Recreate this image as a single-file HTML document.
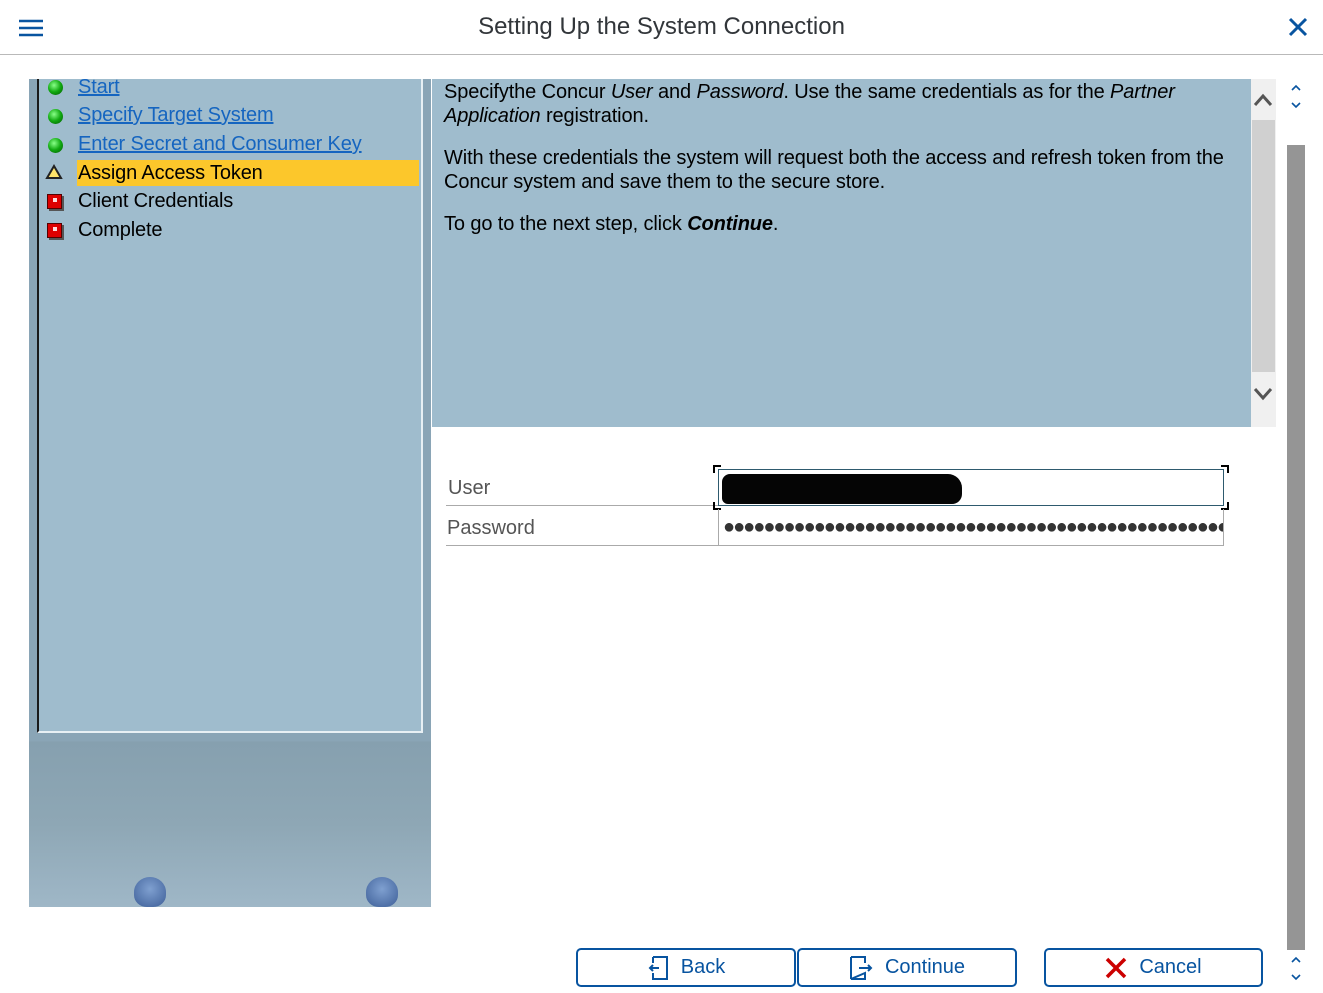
<!DOCTYPE html>
<html><head><meta charset="utf-8"><style>
*{margin:0;padding:0;box-sizing:border-box}
body{width:1323px;height:993px;background:#fff;position:relative;overflow:hidden;font-family:"Liberation Sans",Arial,sans-serif}
.abs{position:absolute}
.hdr{left:0;top:0;width:1323px;height:55px;border-bottom:1px solid #b9b9b9}
.title{left:0;width:1323px;top:12px;text-align:center;font-size:24px;color:#32363a}
.left{left:29px;top:79px;width:402px;height:828px;background:linear-gradient(#8aa5b6,#8aa5b6 80%,#86a0af 80%,#8ea7b5 90%,#9fb7c7)}
.inner{left:37px;top:79px;width:386px;height:654px;background:#9fbccd;border-left:2px solid #1a1a1a;border-right:2px solid #e8f0f4;border-bottom:2px solid #e8f0f4}
.step{position:absolute;left:39px;font-size:20px;letter-spacing:-0.15px;color:#000;height:26px;line-height:26px}
.step a{color:#1565c0;text-decoration:underline}
.dot{position:absolute;left:9px;width:15px;height:15px;border-radius:50%;background:radial-gradient(circle at 40% 35%,#8f8,#1a1 50%,#050);}
.sq{position:absolute;left:8px;width:15px;height:15px;background:#d00;border:1px solid #500;box-shadow:2px 2px 0 #555}
.sq::after{content:"";position:absolute;left:5px;top:3px;width:4px;height:4px;background:#fdd}
.pane{left:432px;top:79px;width:819px;height:348px;background:#9fbccd;padding:2px 12px;font-size:20px;letter-spacing:-0.12px;color:#000;line-height:23.5px}
.pane p{margin-bottom:19px}
.btn{position:absolute;top:948px;height:39px;border:2px solid #0854a0;border-radius:5px;color:#0854a0;font-size:20px;display:flex;align-items:center;justify-content:center;gap:12px}
.cn{position:absolute;width:8px;height:8px;border-color:#000;border-style:solid;border-width:0}
</style></head><body>
<div class="abs hdr"></div>
<svg class="abs" style="left:18px;top:18px" width="26" height="20"><g stroke="#0854a0" stroke-width="2.6"><line x1="1" y1="3" x2="25" y2="3"/><line x1="1" y1="10" x2="25" y2="10"/><line x1="1" y1="17" x2="25" y2="17"/></g></svg>
<div class="abs title" style="top:13px">Setting Up the System Connection</div>
<svg class="abs" style="left:1288px;top:17px" width="20" height="20"><g stroke="#0854a0" stroke-width="3"><line x1="2" y1="2" x2="18" y2="18"/><line x1="18" y1="2" x2="2" y2="18"/></g></svg>

<div class="abs left"></div>
<div class="abs" style="left:134px;top:877px;width:32px;height:30px;border-radius:50% 50% 40% 40%;background:radial-gradient(circle at 50% 40%,#7fa0d0,#3e5f98)"></div>
<div class="abs" style="left:366px;top:877px;width:32px;height:30px;border-radius:50% 50% 40% 40%;background:radial-gradient(circle at 50% 40%,#7fa0d0,#3e5f98)"></div>
<div class="abs inner">
 <div class="dot" style="top:1px"></div><div class="step" style="top:-5px"><a>Start</a></div>
 <div class="dot" style="top:30px"></div><div class="step" style="top:23px"><a>Specify Target System</a></div>
 <div class="dot" style="top:59px"></div><div class="step" style="top:52px"><a>Enter Secret and Consumer Key</a></div>
 <div class="step" style="top:81px;left:38px;width:342px;background:#fcc72b;padding-left:1px">Assign Access Token</div>
 <svg style="position:absolute;left:6px;top:85px" width="18" height="16"><path d="M9 2 L16 14 L2 14 Z" fill="#ffe46a" stroke="#222" stroke-width="2"/></svg>
 <div class="sq" style="top:115px"></div><div class="step" style="top:109px">Client Credentials</div>
 <div class="sq" style="top:144px"></div><div class="step" style="top:138px">Complete</div>
</div>

<div class="abs pane">
<p>Specifythe Concur <i>User</i> and <i>Password</i>. Use the same credentials as for the <i>Partner Application</i> registration.</p>
<p>With these credentials the system will request both the access and refresh token from the Concur system and save them to the secure store.</p>
<p>To go to the next step, click <b><i>Continue</i></b>.</p>
</div>
<div class="abs" style="left:1251px;top:79px;width:25px;height:348px;background:#f0f0f0"></div>
<div class="abs" style="left:1252px;top:120px;width:23px;height:252px;background:#d0d0d0"></div>
<svg class="abs" style="left:1253px;top:92px" width="20" height="16"><path d="M2 13 L10 4 L18 13" fill="none" stroke="#555" stroke-width="3"/></svg>
<svg class="abs" style="left:1253px;top:386px" width="20" height="16"><path d="M2 3 L10 12 L18 3" fill="none" stroke="#555" stroke-width="3"/></svg>

<div class="abs" style="left:1287px;top:145px;width:18px;height:805px;background:#959595"></div>
<svg class="abs" style="left:1290px;top:83px" width="12" height="28"><path d="M2 7 L6 3 L10 7 M2 20 L6 24 L10 20" fill="none" stroke="#0854a0" stroke-width="1.6"/></svg>
<svg class="abs" style="left:1290px;top:955px" width="12" height="28"><path d="M2 7 L6 3 L10 7 M2 20 L6 24 L10 20" fill="none" stroke="#0854a0" stroke-width="1.6"/></svg>

<div class="abs" style="left:448px;top:477px;font-size:20px;color:#555">User</div>
<div class="abs" style="left:446px;top:505px;width:272px;height:1px;background:#aaa"></div>
<div class="abs" style="left:447px;top:517px;font-size:20px;color:#555">Password</div>
<div class="abs" style="left:446px;top:545px;width:778px;height:1px;background:#aaa"></div>
<div class="abs" style="left:718px;top:469px;width:506px;height:37px;border:1px solid #2e5a6e;background:#fff"></div>
<div class="abs" style="left:722px;top:474px;width:240px;height:30px;background:#050505;border-radius:8px 14px 10px 6px"></div>
<div class="cn" style="left:713px;top:465px;border-left-width:2px;border-top-width:2px"></div>
<div class="cn" style="left:1221px;top:465px;border-right-width:2px;border-top-width:2px"></div>
<div class="cn" style="left:713px;top:502px;border-left-width:2px;border-bottom-width:2px"></div>
<div class="cn" style="left:1221px;top:502px;border-right-width:2px;border-bottom-width:2px"></div>
<div class="abs" style="left:718px;top:509px;width:506px;height:37px;border:1px solid #aaa;border-top:none;overflow:hidden;white-space:nowrap;font-size:20px;line-height:36px;padding-left:4px;color:#333;letter-spacing:-2px">●●●●●●●●●●●●●●●●●●●●●●●●●●●●●●●●●●●●●●●●●●●●●●●●●●</div>

<div class="btn" style="left:576px;width:220px"><svg width="22" height="26"><path d="M6 2 H20 V24 H6 V18 M6 8 V2 M12 13 H3 M6 10 L3 13 L6 16" fill="none" stroke="#0854a0" stroke-width="2"/></svg>Back</div>
<div class="btn" style="left:797px;width:220px"><svg width="24" height="26"><path d="M2 2 H16 V8 M16 18 V24 H2 Z M2 2 V24 M10 13 H22 M19 10 L22 13 L19 16" fill="none" stroke="#0854a0" stroke-width="2"/></svg>Continue</div>
<div class="btn" style="left:1044px;width:219px"><svg width="22" height="22"><g stroke="#c00" stroke-width="3.5"><line x1="2" y1="2" x2="20" y2="20"/><line x1="20" y1="2" x2="2" y2="20"/></g></svg>Cancel</div>
</body></html>
